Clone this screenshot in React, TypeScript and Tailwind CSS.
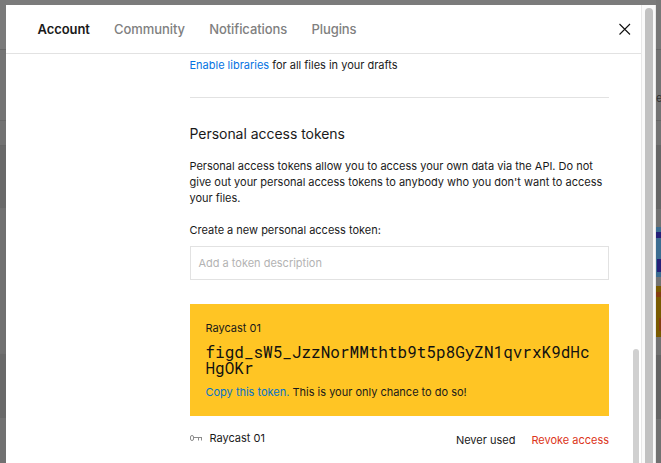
import React from "react";

function PageLeft() {
  return (
    <div className="flex w-[6px] shrink-0 flex-col bg-[#707070]">
      <div className="h-[50px] border-b border-[#686868] bg-[#7a7a7a]" />
      <div className="h-[71px] border-b border-[#686868] bg-[#747474]" />
      <div className="h-[25px] border-b border-[#666666] bg-[#727272]" />
      <div className="h-[62px] bg-[#696969]" />
      <div className="mr-[2px] h-[146px] rounded-r-[4px] bg-[#717171]" />
      <div className="h-[64px] bg-[#696969]" />
      <div className="flex-1 bg-[#717171]" />
    </div>
  );
}

function PageRight() {
  return (
    <div className="flex w-[5px] shrink-0 flex-col overflow-hidden bg-[#707070]">
      <div className="h-[50px] border-b border-[#666666] bg-[#777777]" />
      <div className="h-[71px] border-b border-[#666666] bg-[#737373] pt-[40px] text-[11px] leading-[16px] text-[#333333]">e</div>
      <div className="h-[25px] border-b border-[#666666] bg-[#737373]" />
      <div className="h-[63px] bg-[#666666]" />
      <div className="h-[18px] bg-[#717171]" />
      <div className="h-[5px] bg-[#3c6d91]" />
      <div className="h-[6px] bg-[#252078]" />
      <div className="h-[21px] bg-[#3c6d91]" />
      <div className="h-[13px] bg-[#3c6d91] pl-px"><div className="h-full bg-[#252078]" /></div>
      <div className="h-[5px] bg-[#3c6d91]" />
      <div className="h-[9px] bg-[#737373]" />
      <div className="h-[6px] bg-[#795a00]" />
      <div className="h-[5px] bg-[#853d10]" />
      <div className="h-[21px] bg-[#795a00]" />
      <div className="h-[13px] bg-[#795a00] pl-[3px]"><div className="h-full bg-[#853d10]" /></div>
      <div className="h-[6px] bg-[#795a00]" />
      <div className="h-[18px] bg-[#717171]" />
      <div className="h-[64px] bg-[#646464]" />
      <div className="flex-1 bg-[#717171]" />
    </div>
  );
}

function Header() {
  return (
    <header className="flex h-[49px] shrink-0 items-center border-b border-[#e2e2e2] pl-[31.5px] pr-[10px] text-[13px] font-medium tracking-[-0.08px] text-[#808080]">
      <nav className="flex flex-1 gap-[24.3px] pt-[2px]">
        <span className="font-semibold text-[#1a1a1a]">Account</span>
        <span>Community</span>
        <span>Notifications</span>
        <span>Plugins</span>
      </nav>
      <svg width="13" height="13" viewBox="0 0 13 13" fill="none" stroke="#111111" strokeWidth="1.1">
        <path d="M1.5 1 12 11.5M12 1 1.5 11.5" />
      </svg>
    </header>
  );
}

function KeyIcon() {
  return (
    <svg className="mt-[2px]" width="12" height="8" viewBox="0 0 12 8" fill="none" stroke="#8c8c8c" strokeWidth="1">
      <rect x="0.5" y="1.5" width="3" height="5" rx="1.5" />
      <path d="M3.5 3.5H12M8.5 3.5V6.5M11.5 3.5V6.5" />
    </svg>
  );
}

function Content() {
  return (
    <main className="ml-[184px] w-[419px] shrink-0 pt-[3px] text-[11px] leading-[16px] tracking-[-0.01px] text-[#1a1a1a]">
      <p className="-ml-[0.5px]"><a className="text-[#0673e2]">Enable libraries</a> for all files in your drafts</p>
      <hr className="mt-[24px] border-[#e2e2e2]" />
      <h2 className="-ml-[0.5px] mt-[24px] text-[14px] leading-[24px] tracking-[-0.04px]">Personal access tokens</h2>
      <p className="-ml-[0.5px] mt-[12px]">
        Personal access tokens allow you to access your own data via the API. Do not<br />
        give out your personal access tokens to anybody who you don't want to access<br />
        your files.
      </p>
      <p className="-ml-[0.5px] mt-[16px]">Create a new personal access token:</p>
      <div className="mt-[8px] h-[34px] border border-[#e2e2e2] px-[7.5px] py-[8px] text-[#b3b3b3]">Add a token description</div>
      <section className="mt-[24px] h-[112px] bg-[#ffc524] px-[15.5px] pt-[16px]">
        <p>Raycast 01</p>
        <p className="mt-[8px] whitespace-nowrap font-['Roboto_Mono','DejaVu_Sans_Mono',monospace] text-[16px] leading-[16px] tracking-normal text-[#111111]">
          figd_sW5_JzzNorMMthtb9t5p8GyZN1qvrxK9dHc<br />HgOKr
        </p>
        <p className="mt-[8px]"><a className="text-[#0673c8]">Copy this token.</a> This is your only chance to do so!</p>
      </section>
      <div className="mt-[14px] flex">
        <div className="mt-[2px]"><KeyIcon /></div>
        <span className="ml-[7.5px] flex-1">Raycast 01</span>
        <span className="mt-[2px]">Never used</span>
        <span className="ml-[16px] mt-[2px] text-[#dc3520]">Revoke access</span>
      </div>
    </main>
  );
}

export default function App() {
  return (
    <div className="flex h-[463px] w-[661px] flex-col overflow-hidden bg-[#7a7a7a] font-[Inter,sans-serif]">
      <div className="h-[5px] shrink-0 bg-[#7b7b7b]" />
      <div className="-mt-[5px] flex h-[463px] shrink-0">
        <PageLeft />
        <div className="mt-[5px] flex w-[650px] shrink-0 overflow-hidden bg-white">
          <div className="flex w-[635px] shrink-0 flex-col">
            <Header />
            <div className="flex flex-1 overflow-hidden">
              <Content />
              <div className="ml-[24px] mt-[295px] flex-1 pr-[2px]">
                <div className="h-full w-[6px] rounded-t-full bg-[#d0d0d0]" />
              </div>
            </div>
          </div>
          <div className="w-[15px] shrink-0 border-l border-r border-[#e8e8e8] bg-[#fafafa] pl-[3px] pt-[3px]">
            <div className="h-full w-[8px] rounded-t-full bg-[#c1c1c1]" />
          </div>
        </div>
        <PageRight />
      </div>
    </div>
  );
}
